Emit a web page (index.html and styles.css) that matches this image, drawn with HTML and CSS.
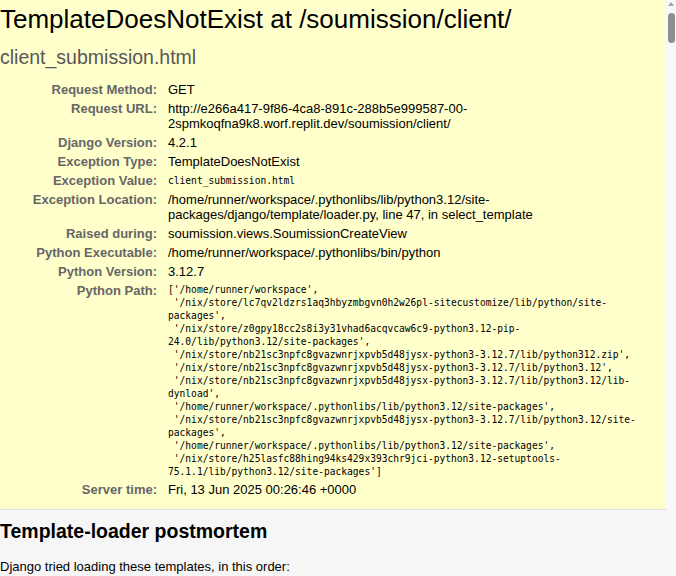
FILE: index.html
```html
<!DOCTYPE html>
<html lang="en">
<head>
<meta charset="utf-8">
<title>TemplateDoesNotExist at /soumission/client/</title>
<link rel="stylesheet" href="styles.css">
</head>
<body>
<div class="summary">
  <h1 class="title">TemplateDoesNotExist at /soumission/client/</h1>
  <pre class="exception-value">client_submission.html</pre>
  <table class="meta">
    <tbody>
      <tr><th>Request Method:</th><td>GET</td></tr>
      <tr><th>Request URL:</th><td>http://e266a417-9f86-4ca8-891c-288b5e999587-00-<br>2spmkoqfna9k8.worf.replit.dev/soumission/client/</td></tr>
      <tr><th>Django Version:</th><td>4.2.1</td></tr>
      <tr><th>Exception Type:</th><td>TemplateDoesNotExist</td></tr>
      <tr><th>Exception Value:</th><td><pre class="mono mono-value">client_submission.html</pre></td></tr>
      <tr><th>Exception Location:</th><td>/home/runner/workspace/.pythonlibs/lib/python3.12/site-<br>packages/django/template/loader.py, line 47, in select_template</td></tr>
      <tr><th>Raised during:</th><td>soumission.views.SoumissionCreateView</td></tr>
      <tr><th>Python Executable:</th><td>/home/runner/workspace/.pythonlibs/bin/python</td></tr>
      <tr><th>Python Version:</th><td>3.12.7</td></tr>
      <tr><th>Python Path:</th><td><pre class="mono python-path">['/home/runner/workspace',
 '/nix/store/lc7qv2ldzrs1aq3hbyzmbgvn0h2w26pl-sitecustomize/lib/python/site-
packages',
 '/nix/store/z0gpy18cc2s8i3y31vhad6acqvcaw6c9-python3.12-pip-
24.0/lib/python3.12/site-packages',
 '/nix/store/nb21sc3npfc8gvazwnrjxpvb5d48jysx-python3-3.12.7/lib/python312.zip',
 '/nix/store/nb21sc3npfc8gvazwnrjxpvb5d48jysx-python3-3.12.7/lib/python3.12',
 '/nix/store/nb21sc3npfc8gvazwnrjxpvb5d48jysx-python3-3.12.7/lib/python3.12/lib-
dynload',
 '/home/runner/workspace/.pythonlibs/lib/python3.12/site-packages',
 '/nix/store/nb21sc3npfc8gvazwnrjxpvb5d48jysx-python3-3.12.7/lib/python3.12/site-
packages',
 '/home/runner/workspace/.pythonlibs/lib/python3.12/site-packages',
 '/nix/store/h25lasfc88hing94ks429x393chr9jci-python3.12-setuptools-
75.1.1/lib/python3.12/site-packages']</pre></td></tr>
      <tr><th>Server time:</th><td>Fri, 13 Jun 2025 00:26:46 +0000</td></tr>
    </tbody>
  </table>
</div>
<div class="postmortem">
  <h2 class="section-title">Template-loader postmortem</h2>
  <p class="text">Django tried loading these templates, in this order:</p>
</div>
<div class="scrollbar" aria-hidden="true"><span class="scroll-arrow"></span><span class="scroll-thumb"></span></div>
</body>
</html>
```
FILE: styles.css
```css
* {
  margin: 0;
  padding: 0;
}

html {
  overflow: hidden;
  background: #fff;
}

body {
  margin: 0 10px 0 0;
  font: 13px "Liberation Sans", Arial, sans-serif;
  color: #000;
  background: #fff;
}

.summary {
  background: #ffc;
  padding: 4px 20px 10px 0;
  border-bottom: 1px solid #ddd;
}

.title {
  font-size: 26px;
  font-weight: normal;
  line-height: normal;
}

.exception-value {
  font-family: "Liberation Sans", Arial, sans-serif;
  font-size: 19.5px;
  line-height: normal;
  color: #575757;
  margin: 11px 0 11px;
  white-space: pre-wrap;
}

.meta {
  border-collapse: collapse;
  width: 100%;
  border: none;
  background: transparent;
}

.meta th,
.meta td {
  vertical-align: top;
  padding: 2px 3px;
  line-height: 15px;
}

.meta th {
  width: 154px;
  padding-right: 8px;
  text-align: right;
  color: #666;
  font-weight: bold;
}

.mono {
  font-family: "DejaVu Sans Mono", monospace;
  font-size: 9.6px;
}

.mono-value {
  line-height: 15px;
}

.python-path {
  line-height: 13px;
  white-space: pre;
}

.postmortem {
  background: #f6f6f6;
  padding: 10px 20px 10px 0;
  border-bottom: 1px solid #ddd;
}

.section-title {
  font-size: 19.5px;
  font-weight: bold;
  line-height: normal;
  margin-bottom: 15.6px;
}

.text {
  line-height: normal;
}

.scrollbar {
  position: fixed;
  top: 0;
  right: 0;
  width: 10px;
  height: 100%;
  background: #f8f8fa;
}

.scroll-arrow {
  position: absolute;
  top: 2px;
  left: 2px;
  width: 0;
  height: 0;
  border-left: 3px solid transparent;
  border-right: 3px solid transparent;
  border-bottom: 4px solid #a3a3a3;
}

.scroll-thumb {
  position: absolute;
  top: 13px;
  left: 2px;
  width: 7px;
  height: 30px;
  border-radius: 4px;
  background: #8e8e8e;
}
```
